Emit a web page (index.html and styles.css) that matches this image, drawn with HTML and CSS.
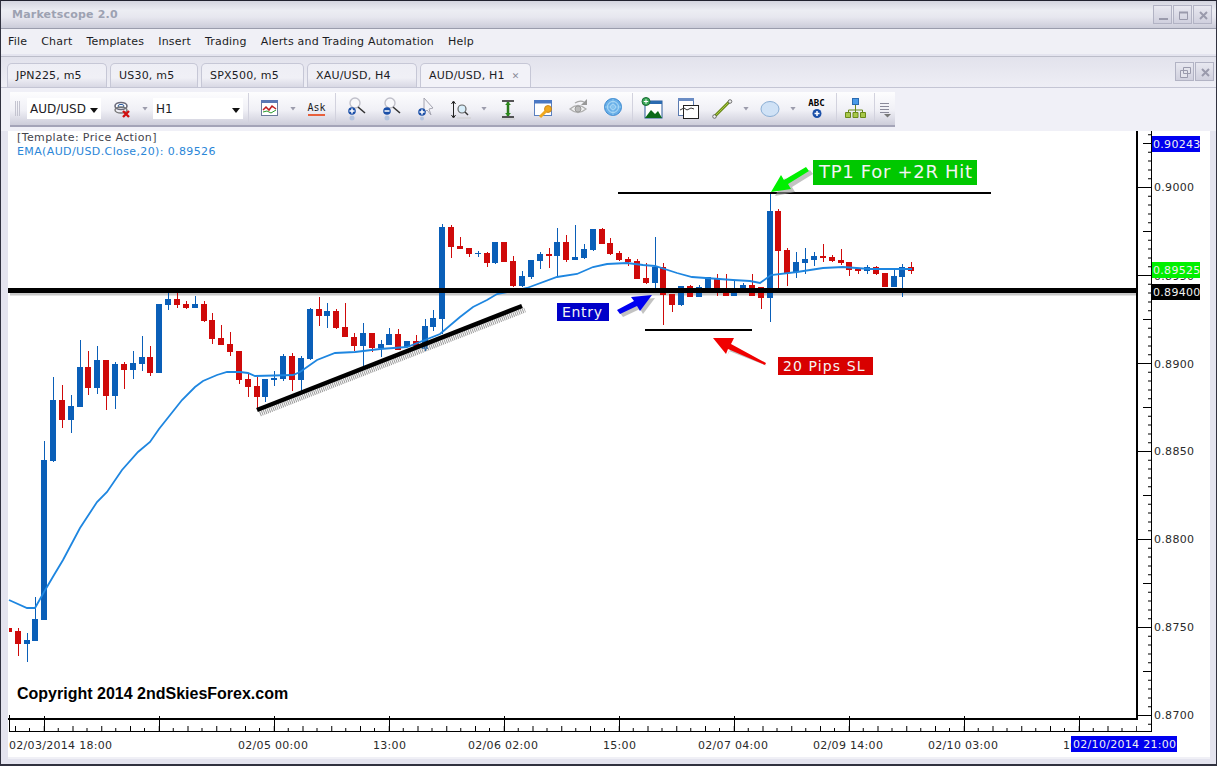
FILE: index.html
```html
<!DOCTYPE html>
<html>
<head>
    <meta charset="utf-8">
    <title>Marketscope 2.0</title>
    <link rel="stylesheet" href="styles.css">
</head>
<body>
<div class="window">
    <div class="titlebar">
        <span class="app-name">Marketscope 2.0</span>
        <div class="win-buttons">
            <span class="win-btn"><svg width="18" height="18"><path d="M5 13h9" stroke="#9a9aac" stroke-width="2"/></svg></span>
            <span class="win-btn"><svg width="18" height="18"><path d="M5.5 6.5h8v7h-8z" fill="none" stroke="#9a9aac"/><path d="M5 6.5h9" stroke="#9a9aac" stroke-width="2"/></svg></span>
            <span class="win-btn"><svg width="18" height="18"><path d="M6 6l7 7M13 6l-7 7" stroke="#9a9aac" stroke-width="2"/></svg></span>
        </div>
    </div>

    <div class="menubar">
        <span>File</span><span>Chart</span><span>Templates</span><span>Insert</span><span>Trading</span><span>Alerts and Trading Automation</span><span>Help</span>
    </div>

    <div class="tabstrip">
        <div class="tab tab-jpn">JPN225, m5</div>
        <div class="tab tab-us">US30, m5</div>
        <div class="tab tab-spx">SPX500, m5</div>
        <div class="tab tab-xau">XAU/USD, H4</div>
        <div class="tab tab-aud active">AUD/USD, H1 <b class="tab-x">&#10005;</b></div>
        <div class="win-buttons doc-buttons">
            <span class="win-btn"><svg width="18" height="18"><path d="M7.5 4.5h7v6h-7zM4.5 7.5h7v7h-7z" fill="#e4e4ec" stroke="#9a9aac"/></svg></span>
            <span class="win-btn"><svg width="18" height="18"><path d="M6 6l7 7M13 6l-7 7" stroke="#9a9aac" stroke-width="2"/></svg></span>
        </div>
    </div>

    <div class="toolrow">
        <div class="toolbar">
            <span class="grip"></span>
            <div class="combo combo-pair">AUD/USD<i class="combo-arrow"></i></div>
            <span class="tool"><svg width="24" height="24"><ellipse cx="11" cy="9" rx="6" ry="3.5" fill="#fff" stroke="#6a6a7a" stroke-width="1.6"/><ellipse cx="11" cy="9" rx="3" ry="1.6" fill="none" stroke="#2a5aa0"/><ellipse cx="11" cy="13" rx="6" ry="3" fill="none" stroke="#777" stroke-width="1.4"/><path d="M13 14l6 6M19 14l-6 6" stroke="#d01010" stroke-width="2.4"/></svg></span>
            <i class="dd"></i>
            <div class="combo combo-period">H1<i class="combo-arrow"></i></div>
            <span class="sep sep-left"></span>
            <span class="tool"><svg width="24" height="24"><rect x="3.5" y="3.5" width="16" height="15" fill="#fff" stroke="#6a7a9a"/><rect x="3" y="3" width="17" height="3" fill="#5a78b4"/><path d="M5 13l3-3 3 3 3-4 4 3" fill="none" stroke="#c02020" stroke-width="1.5"/><path d="M5 15l4-1 4 2 5-3" fill="none" stroke="#2a9a2a"/></svg></span>
            <i class="dd"></i>
            <span class="tool ask">Ask</span>
            <span class="sep"></span>
            <span class="tool"><svg width="24" height="26"><circle cx="11" cy="7" r="5" fill="#f8f8fb" stroke="#c0c0ca" stroke-width="1.4"/><path d="M14 11l7 6" stroke="#333" stroke-width="1.6"/><circle cx="8" cy="15" r="3.8" fill="#1a4fa8"/><path d="M5.500 15h5M8 12.500v5" stroke="#fff" stroke-width="1.500"/><circle cx="8" cy="22" r="2.500" fill="#b4c4de"/></svg></span>
            <span class="tool"><svg width="24" height="26"><circle cx="11" cy="7" r="5" fill="#f8f8fb" stroke="#c0c0ca" stroke-width="1.400"/><path d="M14 11l7 6" stroke="#333" stroke-width="1.600"/><circle cx="8" cy="15" r="3.800" fill="#1a4fa8"/><path d="M5.500 15h5" stroke="#fff" stroke-width="1.500"/><circle cx="8" cy="22" r="2.500" fill="#b4c4de"/></svg></span>
            <span class="tool"><svg width="24" height="26"><path d="M10 2l9 10-4 1 2 6-4-5-3 3z" fill="#f4f4f8" stroke="#a4a4b0"/><circle cx="8" cy="16" r="3.800" fill="#1a4fa8"/><path d="M5.500 16h5M8 13.500v5" stroke="#fff" stroke-width="1.500"/><circle cx="8" cy="22.500" r="2" fill="#b4c4de"/></svg></span>
            <span class="tool"><svg width="24" height="24"><path d="M4.500 5v15M2.500 7l2-3 2 3M2.500 18l2 3 2-3" fill="none" stroke="#222"/><circle cx="13" cy="12" r="4" fill="#d8eefa" stroke="#666" stroke-width="1.200"/><path d="M16 15l3 3" stroke="#333" stroke-width="1.400"/><path d="M8 21h14" stroke="#ccc"/></svg></span>
            <i class="dd"></i>
            <span class="tool"><svg width="24" height="24"><path d="M6 4h12M6 20h12" stroke="#222" stroke-width="1.500"/><path d="M12 5v14" stroke="#2a7a1a" stroke-width="2.500"/><path d="M9 8l3-3 3 3zM9 16l3 3 3-3z" fill="#2a8a1a"/><path d="M5 22h14" stroke="#ccc"/></svg></span>
            <span class="tool"><svg width="24" height="24"><rect x="3.500" y="3.500" width="17" height="15" fill="#fff" stroke="#5a80c0"/><rect x="3" y="3" width="18" height="3.500" fill="#4a78c4"/><circle cx="17" cy="12" r="3.500" fill="#f0a820" stroke="#c07a10" stroke-width=".8"/><path d="M15 14l-6 6" stroke="#f0a820" stroke-width="3"/></svg></span>
            <span class="tool"><svg width="24" height="26"><path d="M4 13q8-7 16 0-8 7-16 0z" fill="#f2f2f2" stroke="#b0b0b0" stroke-width="1.300"/><circle cx="12" cy="13" r="3" fill="#bbb" stroke="#999"/><path d="M9 7q5-3 9-1" fill="none" stroke="#aaa" stroke-width="1.300"/><path d="M21 3v6h-6z" fill="#999"/></svg></span>
            <span class="tool"><svg width="24" height="26"><circle cx="12" cy="11" r="8.500" fill="#6ab0e8" stroke="#3a88d0"/><circle cx="12" cy="11" r="5.500" fill="none" stroke="#b8e0f8"/><circle cx="12" cy="11" r="2.500" fill="none" stroke="#b8e0f8"/><path d="M12 2.500v17M3.500 11h17" stroke="#9ad0f4" stroke-width=".8"/><path d="M8 21h8l-2 3h-4z" fill="#cfe2f4"/></svg></span>
            <span class="sep sep-mid"></span>
            <span class="tool"><svg width="24" height="24"><rect x="4" y="4" width="17" height="17" fill="#fff" stroke="#2a5a9a"/><rect x="4" y="4" width="17" height="3" fill="#2a6ab0"/><path d="M4 21l6-8 4 4 3-3 4 7z" fill="#0a6a1a"/><circle cx="5" cy="4.500" r="4" fill="#3aa858" stroke="#1a6a34"/><path d="M2.800 4.500h4.400M5 2.300v4.400" stroke="#fff"/></svg></span>
            <span class="tool"><svg width="24" height="24"><rect x="2.500" y="1.500" width="15" height="17" fill="#fff" stroke="#5a7ab0"/><rect x="2" y="1" width="16" height="3" fill="#6a8cc4"/><rect x="7.500" y="8.500" width="15" height="13" fill="#fff" stroke="#222"/><path d="M4 13l4-2 3 2 4-2 3 1" fill="none" stroke="#333"/></svg></span>
            <span class="tool"><svg width="24" height="24"><path d="M3 20L19 4" stroke="#6a8a1a" stroke-width="3"/><path d="M3 20L19 4" stroke="#a8c83a"/><circle cx="3.500" cy="19.500" r="1.800" fill="#eee" stroke="#555" stroke-width=".8"/><circle cx="19" cy="4.500" r="1.800" fill="#eee" stroke="#555" stroke-width=".8"/></svg></span>
            <i class="dd"></i>
            <span class="tool"><svg width="24" height="24"><ellipse cx="12" cy="12" rx="9" ry="7.500" fill="#d0e2f6" stroke="#8aaed4"/></svg></span>
            <i class="dd"></i>
            <span class="tool tool-abc"><span class="abc">ABC</span><svg width="12" height="11"><circle cx="6" cy="5.500" r="4.500" fill="#1a4fa8"/><path d="M3.500 5.500h5M6 3v5" stroke="#fff" stroke-width="1.500"/></svg></span>
            <span class="sep sep-org"></span>
            <span class="tool"><svg width="24" height="24"><rect x="8.500" y="1.500" width="6" height="6" fill="#4a9ae8" stroke="#2a6ab0"/><path d="M11.500 8v5M4.500 15v-2h14v2M11.500 13v2" fill="none" stroke="#6a8a1a"/><path d="M1.500 15.500h5v5h-5zM9 15.500h5v5H9zM16.500 15.500h5v5h-5z" fill="#a8c84a" stroke="#6a8a1a"/></svg></span>
            <span class="sep sep-end"></span>
            <span class="overflow"><svg width="14" height="18"><path d="M2 3.500h9M2 6.500h9M2 9.500h9M2 12.500h9" stroke="#8a8a9a"/><path d="M6 14h7l-3.500 3.500z" fill="#777"/></svg></span>
        </div>
    </div>

    <div class="chart">
        <svg class="plot" width="1202" height="626" viewBox="8 131 1202 626">
            <text class="legend" x="17" y="141">[Template: Price Action]</text>
            <text class="legend ema-label" x="17" y="155">EMA(AUD/USD.Close,20): 0.89526</text>

            <path class="line-shadow" d="M10 294H1136"/>

            <!-- candles -->
            <path class="wick-blue" d="M27.500 633V662M35.500 597V641M44.500 441V620M53.500 377V462M71.500 395V433M80.500 340V407M97.500 346V394M115.500 362V409M133.500 351V379M142.500 336V371M168.500 293V310M195.500 296V308M265.500 379V402M274.500 371V386M283.500 354V381M301.500 356V391M310.500 308V360M327.500 303V328M363.500 323V366M381.500 340V357M389.500 328V345M407.500 341V347M425.500 319V351M433.500 310V331M442.500 224V334M478.500 251V257M495.500 242V264M522.500 271V287M531.500 260V279M540.500 252V269M557.500 228V277M575.500 225V260M584.500 244V259M593.500 229V251M655.500 237V288M681.500 286V306M699.500 285V297M708.500 277V288M734.500 280V296M743.500 283V288M770.500 193V322M796.500 252V278M805.500 248V274M814.500 252V266M867.500 265V274M894.500 270V287M902.500 264V297"/>
            <path class="body-blue" d="M27 640V644M35 619V641M44 460V620M53 400V461M71 406V420M80 367V407M97 360V388M115 364V396M133 363V370M142 357V364M159 304V373M168 299V305M195 304V308M265 379V397M274 378V380M283 356V379M301 358V380M310 309V359M327 311V316M363 333V346M381 344V348M389 334V345M407 341V347M425 326V349M433 318V327M442 227V319M478 253V254M495 242V263M522 276V286M531 260V277M540 254V261M557 242V256M575 257V260M584 249V258M593 229V250M655 267V283M681 286V305M699 287V297M708 277V288M734 288V296M743 285V288M770 211V298M796 262V272M805 259V263M814 256V260M867 267V271M894 276V287M902 267V277"/>
            <path class="wick-red" d="M18.500 628V656M62.500 385V428M88.500 351V395M106.500 360V410M124.500 362V389M150.500 346V376M177.500 293V308M186.500 301V309M204.500 301V322M212.500 313V344M221.500 325V345M230.500 332V356M239.500 351V384M248.500 374V397M257.500 377V410M292.500 353V391M319.500 297V326M336.500 309V329M345.500 303V337M354.500 333V351M372.500 333V352M398.500 329V350M416.500 335V346M451.500 225V258M460.500 237V249M469.500 248V257M487.500 252V267M504.500 242V262M513.500 256V287M549.500 248V268M566.500 235V262M602.500 228V244M610.500 238V255M619.500 251V261M628.500 257V266M637.500 259V279M646.500 263V284M663.500 263V325M672.500 294V312M690.500 285V297M717.500 274V296M726.500 274V296M752.500 274V296M761.500 287V309M778.500 209V288M787.500 248V286M823.500 244V262M832.500 255V262M841.500 249V265M849.500 262V276M858.500 269V274M876.500 266V275M885.500 273V287M911.500 262V274"/>
            <path class="body-red" d="M18 631V644M62 400V420M88 367V388M106 360V396M124 364V370M150 357V373M177 299V305M186 304V308M204 304V321M212 320V339M221 338V345M230 344V352M239 351V380M248 379V387M257 386V397M292 356V380M319 309V316M336 311V328M345 327V337M354 337V346M372 333V348M398 334V350M416 341V346M451 227V247M460 246V249M469 248V254M487 253V263M504 242V262M513 261V286M549 254V256M566 242V260M602 229V244M610 243V254M619 253V260M628 259V262M637 261V279M646 278V283M663 267V295M672 294V305M690 286V297M717 278V288M726 288V296M752 285V296M761 287V298M778 211V251M787 250V273M823 256V258M832 257V261M841 260V263M849 262V270M858 269V271M876 267V274M885 273V287M911 267V271"/>
            <rect class="stub-red" x="9" y="628" width="3" height="4"/>

            <!-- ema -->
            <path class="ema" d="M9 600L27 608L35 608L44 592L54 575L63 560L80 528L97 502L107 492L122 470L138 452L150 442L159 429L182 400L195 387L203 381L217 375L227 372L240 372L248 373L255 376L293 375L300 372L317 360L335 353L355 352L380 349L407 347L440 334L460 317L473 307L487 300L497 294L507 292L527 288L557 277L577 274L593 267L607 264L627 263L643 265L655 266L677 273L692 277L733 280L750 281L760 283L771 275L797 272L823 268L843 267L870 269L912 269"/>

            <!-- drawn lines -->
            <path class="line-heavy" d="M7 290.500H1137"/>
            <path class="trend-shadow" d="M260 414L525 310"/>
            <path class="trend" d="M257 410L522 306"/>
            <path class="line-thin" d="M618 193H991M645 330H752"/>

            <!-- arrows and notes -->
            <polygon class="arrow-shadow" points="775,196 785,178 788,183 810,170 813,174 792,187 795,192"/>
            <polygon class="arrow-green" points="771,192 781,175 784,180 806,167 809,171 788,184 791,189"/>
            <polygon class="arrow-shadow" points="655,298 643,314 640,309 623,317 620,313 637,304 634,300"/>
            <polygon class="arrow-blue" points="652,295 640,311 637,306 620,314 617,310 634,301 631,297"/>
            <polygon class="arrow-shadow" points="735,340 732,346 767,366 729,351 727,356"/>
            <polygon class="arrow-red" points="713,338 734,338 731,344 766,363 765,365 728,349 726,354"/>
            <rect class="note-green" x="813" y="160" width="164" height="25"/>
            <text class="note note-large" x="819" y="178">TP1 For +2R Hit</text>
            <rect class="note-blue" x="557" y="303" width="52" height="18"/>
            <text class="note note-entry" x="562" y="317">Entry</text>
            <rect class="note-red" x="778" y="357" width="95" height="18"/>
            <text class="note" x="783" y="371">20 Pips SL</text>
            <text class="copyright" x="17" y="699">Copyright 2014 2ndSkiesForex.com</text>

            <!-- frame and axes -->
            <path class="axis-bold" d="M1137 131V720M8 719H1138"/>
            <path class="axis" d="M1151.500 131V731.500M9 731.500H1152M9.500 715V731"/>
            <path class="tick tick-s" d="M29 729.500H1137"/>
            <path class="tick tick-m" d="M15 728.500H1137"/>
            <path class="tick tick-l" d="M44 723.500H1137"/>
            <path class="ptick ptick-s" d="M1150 134.200V731"/>
            <path class="ptick ptick-m" d="M1147.500 143V731"/>
            <path class="ptick ptick-l" d="M1144.500 187V731"/>

            <text class="axis-label" x="1154" y="191">0.9000</text>
            <text class="axis-label" x="1154" y="280">0.8950</text>
            <text class="axis-label" x="1154" y="368">0.8900</text>
            <text class="axis-label" x="1154" y="455">0.8850</text>
            <text class="axis-label" x="1154" y="543">0.8800</text>
            <text class="axis-label" x="1154" y="631">0.8750</text>
            <text class="axis-label" x="1154" y="719">0.8700</text>

            <rect class="tag-blue" x="1152" y="136" width="48" height="16"/>
            <text class="tag-text" x="1153" y="148">0.90243</text>
            <rect class="tag-green" x="1152" y="262" width="48" height="16"/>
            <text class="tag-text" x="1153" y="274">0.89525</text>
            <rect class="tag-black" x="1152" y="284" width="48" height="16"/>
            <text class="tag-text" x="1153" y="296">0.89400</text>

            <text class="axis-label" x="9" y="749">02/03/2014 18:00</text>
            <text class="axis-label" x="238" y="749">02/05 00:00</text>
            <text class="axis-label" x="373" y="749">13:00</text>
            <text class="axis-label" x="468" y="749">02/06 02:00</text>
            <text class="axis-label" x="603" y="749">15:00</text>
            <text class="axis-label" x="698" y="749">02/07 04:00</text>
            <text class="axis-label" x="813" y="749">02/09 14:00</text>
            <text class="axis-label" x="928" y="749">02/10 03:00</text>
            <text class="axis-label" x="1063" y="749">10:00</text>
            <rect class="tag-blue" x="1071" y="736" width="106" height="16"/>
            <text class="tag-text" x="1073" y="748">02/10/2014 21:00</text>
        </svg>
    </div>
</div>
</body>
</html>
```
FILE: styles.css
```css
* {
    box-sizing: border-box;
}
html, body {
    margin: 0;
    height: 100%;
    overflow: hidden;
}
body {
    font-family: "DejaVu Sans", sans-serif;
    background-color: #e6e6f0;
    color: #1c1c24;
}
.window {
    width: 1217px;
    height: 766px;
    display: flex;
    flex-direction: column;
    background-color: #e4e4ef;
    border-top: 1px solid #20212e;
    border-bottom: 2px solid #30313f;
    border-left: 1px solid #30313f;
    border-right: 1px solid #30313f;
}

/* title */
.titlebar {
    height: 28px;
    flex: none;
    display: flex;
    align-items: center;
    justify-content: space-between;
    padding: 0 4px 0 11px;
    background: linear-gradient(#d3d4df, #ecedf3 35%, #e7e7ef 60%, #cbccd9);
    border-bottom: 1px solid #9a9cac;
}
.app-name {
    font-size: 11px;
    font-weight: bold;
    letter-spacing: .2px;
    color: #9da2b2;
}
.win-buttons {
    display: flex;
    gap: 1px;
}
.win-btn {
    width: 19px;
    height: 19px;
    display: flex;
    background: linear-gradient(#e8e8f0, #d0d0de);
    border: 1px solid #b2b3c4;
}

/* menu */
.menubar {
    height: 25px;
    flex: none;
    display: flex;
    align-items: center;
    gap: 14px;
    padding: 0 7px;
    font-size: 11px;
    letter-spacing: .2px;
    background-color: #f0f0f6;
}

/* tabs */
.tabstrip {
    height: 32px;
    flex: none;
    display: flex;
    align-items: flex-end;
    gap: 3px;
    padding: 0 2px 0 6px;
    margin-top: 2px;
    background: linear-gradient(#e2e2ec, #eeeef5);
    border-top: 1px solid #bcbdca;
    border-bottom: 1px solid #c4c5d4;
}
.tab {
    height: 24px;
    padding-left: 8px;
    display: flex;
    align-items: center;
    gap: 7px;
    font-size: 11px;
    letter-spacing: .2px;
    white-space: nowrap;
    background: linear-gradient(#eeeef5, #f0f0f6 60%, #d8d8e4);
    border: 1px solid #c6c7d6;
    border-bottom: none;
    border-radius: 5px 5px 0 0;
}
.tab-jpn { width: 100px; }
.tab-us { width: 88px; }
.tab-spx { width: 103px; }
.tab-xau { width: 110px; }
.tab-aud { width: 111px; }
.active {
    background: #f2f2f8;
}
.tab-x {
    font-size: 9px;
    color: #8a8a98;
}
.doc-buttons {
    margin-left: auto;
    align-self: flex-start;
    margin-top: 5px;
}

/* toolbar */
.toolrow {
    height: 43px;
    flex: none;
    padding: 4px 0 0 9px;
    background-color: #f0f0f7;
}
.toolbar {
    width: 885px;
    height: 35px;
    display: flex;
    align-items: center;
    background: linear-gradient(#fdfdfe, #f0f0f6 55%, #cdcdda);
    border-bottom: 2px solid #a4a4b8;
}
.grip {
    width: 6px;
    height: 15px;
    margin: 0 6px 0 5px;
    background: repeating-linear-gradient(90deg, #c4c4d0 0 1px, transparent 1px 2px);
}
.combo {
    height: 21px;
    display: flex;
    align-items: center;
    flex: none;
    position: relative;
    padding-left: 3px;
    font-size: 12px;
    background-color: #fff;
}
.combo-pair {
    width: 74px;
    margin-right: 3px;
}
.combo-period {
    width: 90px;
    margin-left: 2px;
}
.combo-arrow {
    position: absolute;
    right: 3px;
    top: 10px;
    border: 4px solid transparent;
    border-top: 5px solid #111;
    border-bottom: none;
}
.tool {
    width: 35px;
    height: 30px;
    flex: none;
    display: flex;
    flex-direction: column;
    align-items: center;
    justify-content: center;
}
.dd {
    width: 12px;
    height: 4px;
    flex: none;
    background: linear-gradient(#9c9cac, #9c9cac) no-repeat;
    clip-path: polygon(25% 0, 75% 0, 50% 100%);
}
.sep {
    width: 1px;
    height: 31px;
    flex: none;
    margin: 0 2px 0 1px;
    background-color: #d2d2de;
}
.sep-left {
    margin: 0 3px 0 5px;
}
.sep-mid {
    margin: 0 2px;
}
.sep-org {
    margin: 0 1px 0 2px;
}
.sep-end {
    margin: 0 0 0 1px;
}
.ask {
    font-family: "DejaVu Sans Mono", monospace;
    font-size: 10px;
    line-height: 11px;
}
.ask::after {
    content: "";
    width: 17px;
    height: 2px;
    margin-top: 1px;
    background-color: #e8603c;
}
.abc {
    font-family: "DejaVu Sans Mono", monospace;
    font-weight: bold;
    font-size: 9px;
    line-height: 9px;
    color: #000;
}
.overflow {
    margin-left: 3px;
    display: flex;
}

/* chart */
.chart {
    flex: 1;
    margin: 0 6px 5px 7px;
    background-color: #fff;
    border-bottom: 2px solid #f0f0f6;
}
.plot {
    display: block;
}
.plot text {
    font-family: "DejaVu Sans", sans-serif;
    font-size: 11px;
    letter-spacing: .3px;
}
.plot .legend {
    letter-spacing: .38px;
    fill: #44444c;
}
.plot .ema-label {
    fill: #2a86d8;
}
.wick-blue, .wick-red, .body-blue, .body-red, .ema, .line-heavy, .line-shadow, .trend, .trend-shadow, .line-thin, .axis, .axis-bold, .tick, .ptick {
    fill: none;
}
.wick-blue {
    stroke: #0a5fb8;
}
.body-blue {
    stroke: #0a5fb8;
    stroke-width: 6;
}
.wick-red {
    stroke: #cf0a0a;
}
.body-red {
    stroke: #cf0a0a;
    stroke-width: 6;
}
.stub-red {
    fill: #cf0a0a;
}
.ema {
    stroke: #1e86e0;
    stroke-width: 1.8;
}
.line-heavy {
    stroke: #000;
    stroke-width: 5;
}
.line-shadow {
    stroke: #c8c8c8;
    stroke-width: 3;
}
.trend {
    stroke: #000;
    stroke-width: 4.500;
}
.trend-shadow {
    stroke: #999;
    stroke-width: 5;
    stroke-dasharray: 1 1;
}
.line-thin {
    stroke: #000;
    stroke-width: 2;
}
.arrow-shadow {
    fill: #9a9a9a;
    opacity: .6;
}
.arrow-green {
    fill: #00f000;
}
.arrow-blue {
    fill: #0000f0;
}
.arrow-red {
    fill: #f00000;
}
.note-green {
    fill: #00c800;
}
.note-blue {
    fill: #0000c8;
}
.note-red {
    fill: #d80000;
}
.plot .note {
    fill: #f4f4f4;
    font-size: 14px;
    letter-spacing: 1.100px;
}
.plot .note-entry {
    letter-spacing: .7px;
}
.plot .note-large {
    font-size: 18px;
    letter-spacing: .7px;
}
.plot .copyright {
    font-family: "Liberation Sans", sans-serif;
    font-weight: bold;
    font-size: 16px;
    letter-spacing: 0;
    fill: #000;
}
.axis-bold {
    stroke: #000;
    stroke-width: 2;
}
.axis {
    stroke: #000;
}
.tick {
    stroke: #000;
}
.tick-s {
    stroke-width: 3;
    stroke-dasharray: 1 27.750;
}
.tick-m {
    stroke-width: 5;
    stroke-dasharray: 1 27.750;
}
.tick-l {
    stroke-width: 15;
    stroke-dasharray: 1 114;
}
.ptick {
    stroke: #000;
}
.ptick-s {
    stroke-width: 4;
    stroke-dasharray: 1 7.800;
}
.ptick-m {
    stroke-width: 9;
    stroke-dasharray: 1 87;
}
.ptick-l {
    stroke-width: 15;
    stroke-dasharray: 1 87;
}
.plot .axis-label {
    fill: #2a2a2a;
}
.tag-blue {
    fill: #0000f0;
}
.tag-green {
    fill: #00f000;
}
.tag-black {
    fill: #000;
}
.plot .tag-text {
    fill: #f0f0f0;
}
```
